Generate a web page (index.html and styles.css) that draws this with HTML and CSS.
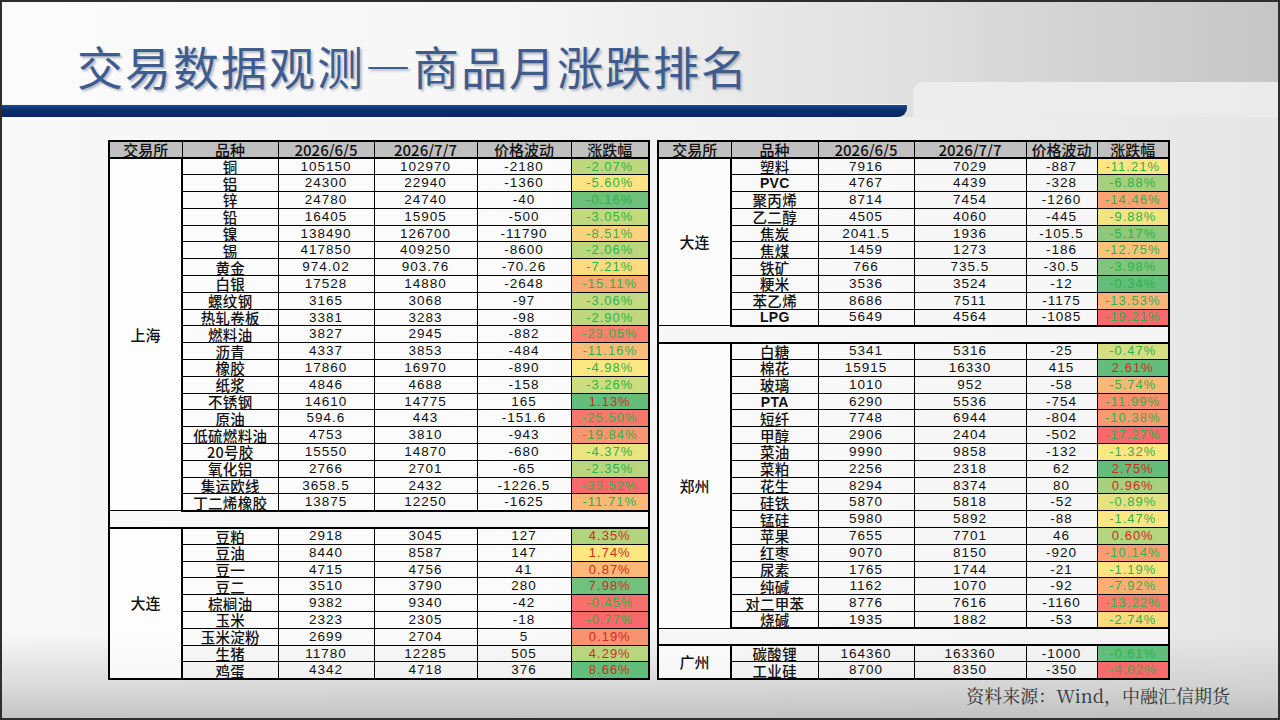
FILE: index.html
```html
<!DOCTYPE html>
<html lang="zh-CN">
<head>
<meta charset="utf-8">
<title>交易数据观测—商品月涨跌排名</title>
<link rel="stylesheet" href="styles.css">
</head>
<body>
<div class="slide">
  <header class="header">
    <h1 class="title">交易数据观测—商品月涨跌排名</h1>
    <div class="bar"></div>
  </header>
  <main class="content">
    <table class="tbl tbl-left">
      <colgroup><col style="width:73px"><col style="width:96px"><col style="width:96px"><col style="width:103px"><col style="width:94px"><col style="width:78px"></colgroup>
      <thead><tr><th>交易所</th><th>品种</th><th>2026/6/5</th><th>2026/7/7</th><th>价格波动</th><th>涨跌幅</th></tr></thead>
      <tbody>
        <tr class="g-first"><td class="ex" rowspan="21">上海</td><td class="nm">铜</td><td>105150</td><td>102970</td><td>-2180</td><td class="pc neg" style="background:#bfd87e">-2.07%</td></tr>
        <tr><td class="nm">铝</td><td>24300</td><td>22940</td><td>-1360</td><td class="pc neg" style="background:#fee383">-5.60%</td></tr>
        <tr><td class="nm">锌</td><td>24780</td><td>24740</td><td>-40</td><td class="pc neg" style="background:#6cc07a">-0.16%</td></tr>
        <tr><td class="nm">铅</td><td>16405</td><td>15905</td><td>-500</td><td class="pc neg" style="background:#c3d97f">-3.05%</td></tr>
        <tr><td class="nm">镍</td><td>138490</td><td>126700</td><td>-11790</td><td class="pc neg" style="background:#fdd27f">-8.51%</td></tr>
        <tr><td class="nm">锡</td><td>417850</td><td>409250</td><td>-8600</td><td class="pc neg" style="background:#bdd77e">-2.06%</td></tr>
        <tr><td class="nm">黄金</td><td>974.02</td><td>903.76</td><td>-70.26</td><td class="pc neg" style="background:#fddc81">-7.21%</td></tr>
        <tr><td class="nm">白银</td><td>17528</td><td>14880</td><td>-2648</td><td class="pc neg" style="background:#fba973">-15.11%</td></tr>
        <tr><td class="nm">螺纹钢</td><td>3165</td><td>3068</td><td>-97</td><td class="pc neg" style="background:#c5da80">-3.06%</td></tr>
        <tr><td class="nm">热轧卷板</td><td>3381</td><td>3283</td><td>-98</td><td class="pc neg" style="background:#bfd87f">-2.90%</td></tr>
        <tr><td class="nm">燃料油</td><td>3827</td><td>2945</td><td>-882</td><td class="pc neg" style="background:#f8826c">-23.05%</td></tr>
        <tr><td class="nm">沥青</td><td>4337</td><td>3853</td><td>-484</td><td class="pc neg" style="background:#fcbd79">-11.16%</td></tr>
        <tr><td class="nm">橡胶</td><td>17860</td><td>16970</td><td>-890</td><td class="pc neg" style="background:#fee683">-4.98%</td></tr>
        <tr><td class="nm">纸浆</td><td>4846</td><td>4688</td><td>-158</td><td class="pc neg" style="background:#cddc81">-3.26%</td></tr>
        <tr><td class="nm">不锈钢</td><td>14610</td><td>14775</td><td>165</td><td class="pc pos" style="background:#63be7b">1.13%</td></tr>
        <tr><td class="nm">原油</td><td>594.6</td><td>443</td><td>-151.6</td><td class="pc neg" style="background:#f8786b">-25.50%</td></tr>
        <tr><td class="nm">低硫燃料油</td><td>4753</td><td>3810</td><td>-943</td><td class="pc neg" style="background:#f99570">-19.84%</td></tr>
        <tr><td class="nm">20号胶</td><td>15550</td><td>14870</td><td>-680</td><td class="pc neg" style="background:#ebe483">-4.37%</td></tr>
        <tr><td class="nm">氧化铝</td><td>2766</td><td>2701</td><td>-65</td><td class="pc neg" style="background:#b9d67e">-2.35%</td></tr>
        <tr><td class="nm">集运欧线</td><td>3658.5</td><td>2432</td><td>-1226.5</td><td class="pc neg" style="background:#f8696b">-33.52%</td></tr>
        <tr class="g-last"><td class="nm">丁二烯橡胶</td><td>13875</td><td>12250</td><td>-1625</td><td class="pc neg" style="background:#fbb977">-11.71%</td></tr>
        <tr class="gap"><td colspan="6"></td></tr>
        <tr class="g-first"><td class="ex" rowspan="9">大连</td><td class="nm">豆粕</td><td>2918</td><td>3045</td><td>127</td><td class="pc pos" style="background:#b3d47e">4.35%</td></tr>
        <tr><td class="nm">豆油</td><td>8440</td><td>8587</td><td>147</td><td class="pc pos" style="background:#fee683">1.74%</td></tr>
        <tr><td class="nm">豆一</td><td>4715</td><td>4756</td><td>41</td><td class="pc pos" style="background:#fcb879">0.87%</td></tr>
        <tr><td class="nm">豆二</td><td>3510</td><td>3790</td><td>280</td><td class="pc pos" style="background:#70c17b">7.98%</td></tr>
        <tr><td class="nm">棕榈油</td><td>9382</td><td>9340</td><td>-42</td><td class="pc neg" style="background:#f8706b">-0.45%</td></tr>
        <tr><td class="nm">玉米</td><td>2323</td><td>2305</td><td>-18</td><td class="pc neg" style="background:#f8696b">-0.77%</td></tr>
        <tr><td class="nm">玉米淀粉</td><td>2699</td><td>2704</td><td>5</td><td class="pc pos" style="background:#f99270">0.19%</td></tr>
        <tr><td class="nm">生猪</td><td>11780</td><td>12285</td><td>505</td><td class="pc pos" style="background:#b8d67e">4.29%</td></tr>
        <tr class="g-last"><td class="nm">鸡蛋</td><td>4342</td><td>4718</td><td>376</td><td class="pc pos" style="background:#63be7b">8.66%</td></tr>
      </tbody>
    </table>
    <table class="tbl tbl-right">
      <colgroup><col style="width:73px"><col style="width:87px"><col style="width:96px"><col style="width:112px"><col style="width:71px"><col style="width:72px"></colgroup>
      <thead><tr><th>交易所</th><th>品种</th><th>2026/6/5</th><th>2026/7/7</th><th>价格波动</th><th>涨跌幅</th></tr></thead>
      <tbody>
        <tr class="g-first"><td class="ex" rowspan="10">大连</td><td class="nm">塑料</td><td>7916</td><td>7029</td><td>-887</td><td class="pc neg" style="background:#fee683">-11.21%</td></tr>
        <tr><td class="nm lat">PVC</td><td>4767</td><td>4439</td><td>-328</td><td class="pc neg" style="background:#a6d07e">-6.88%</td></tr>
        <tr><td class="nm">聚丙烯</td><td>8714</td><td>7454</td><td>-1260</td><td class="pc neg" style="background:#fba373">-14.46%</td></tr>
        <tr><td class="nm">乙二醇</td><td>4505</td><td>4060</td><td>-445</td><td class="pc neg" style="background:#f3e383">-9.88%</td></tr>
        <tr><td class="nm">焦炭</td><td>2041.5</td><td>1936</td><td>-105.5</td><td class="pc neg" style="background:#8dc87d">-5.17%</td></tr>
        <tr><td class="nm">焦煤</td><td>1459</td><td>1273</td><td>-186</td><td class="pc neg" style="background:#fcc27a">-12.75%</td></tr>
        <tr><td class="nm">铁矿</td><td>766</td><td>735.5</td><td>-30.5</td><td class="pc neg" style="background:#80c57c">-3.98%</td></tr>
        <tr><td class="nm">粳米</td><td>3536</td><td>3524</td><td>-12</td><td class="pc neg" style="background:#63be7b">-0.34%</td></tr>
        <tr><td class="nm">苯乙烯</td><td>8686</td><td>7511</td><td>-1175</td><td class="pc neg" style="background:#fcb378">-13.53%</td></tr>
        <tr class="g-last"><td class="nm lat">LPG</td><td>5649</td><td>4564</td><td>-1085</td><td class="pc neg" style="background:#f8696b">-19.21%</td></tr>
        <tr class="gap"><td colspan="6"></td></tr>
        <tr class="g-first"><td class="ex" rowspan="17">郑州</td><td class="nm">白糖</td><td>5341</td><td>5316</td><td>-25</td><td class="pc neg" style="background:#d5df82">-0.47%</td></tr>
        <tr><td class="nm">棉花</td><td>15915</td><td>16330</td><td>415</td><td class="pc pos" style="background:#63be7b">2.61%</td></tr>
        <tr><td class="nm">玻璃</td><td>1010</td><td>952</td><td>-58</td><td class="pc neg" style="background:#fcb879">-5.74%</td></tr>
        <tr><td class="nm lat">PTA</td><td>6290</td><td>5536</td><td>-754</td><td class="pc neg" style="background:#fa8c6f">-11.99%</td></tr>
        <tr><td class="nm">短纤</td><td>7748</td><td>6944</td><td>-804</td><td class="pc neg" style="background:#fa9a71">-10.38%</td></tr>
        <tr><td class="nm">甲醇</td><td>2906</td><td>2404</td><td>-502</td><td class="pc neg" style="background:#f8696b">-17.27%</td></tr>
        <tr><td class="nm">菜油</td><td>9990</td><td>9858</td><td>-132</td><td class="pc neg" style="background:#fee683">-1.32%</td></tr>
        <tr><td class="nm">菜粕</td><td>2256</td><td>2318</td><td>62</td><td class="pc pos" style="background:#63be7b">2.75%</td></tr>
        <tr><td class="nm">花生</td><td>8294</td><td>8374</td><td>80</td><td class="pc pos" style="background:#a8d17e">0.96%</td></tr>
        <tr><td class="nm">硅铁</td><td>5870</td><td>5818</td><td>-52</td><td class="pc neg" style="background:#e4e283">-0.89%</td></tr>
        <tr><td class="nm">锰硅</td><td>5980</td><td>5892</td><td>-88</td><td class="pc neg" style="background:#fee683">-1.47%</td></tr>
        <tr><td class="nm">苹果</td><td>7655</td><td>7701</td><td>46</td><td class="pc pos" style="background:#b6d57f">0.60%</td></tr>
        <tr><td class="nm">红枣</td><td>9070</td><td>8150</td><td>-920</td><td class="pc neg" style="background:#fa9e72">-10.14%</td></tr>
        <tr><td class="nm">尿素</td><td>1765</td><td>1744</td><td>-21</td><td class="pc neg" style="background:#fee483">-1.19%</td></tr>
        <tr><td class="nm">纯碱</td><td>1162</td><td>1070</td><td>-92</td><td class="pc neg" style="background:#fcae76">-7.92%</td></tr>
        <tr><td class="nm">对二甲苯</td><td>8776</td><td>7616</td><td>-1160</td><td class="pc neg" style="background:#f87b6c">-13.22%</td></tr>
        <tr class="g-last"><td class="nm">烧碱</td><td>1935</td><td>1882</td><td>-53</td><td class="pc neg" style="background:#fed980">-2.74%</td></tr>
        <tr class="gap"><td colspan="6"></td></tr>
        <tr class="g-first"><td class="ex" rowspan="2">广州</td><td class="nm">碳酸锂</td><td>164360</td><td>163360</td><td>-1000</td><td class="pc neg" style="background:#63be7b">-0.61%</td></tr>
        <tr class="g-last"><td class="nm">工业硅</td><td>8700</td><td>8350</td><td>-350</td><td class="pc neg" style="background:#f8696b">-4.02%</td></tr>
      </tbody>
    </table>
  </main>
  <footer class="source">资料来源：Wind，中融汇信期货</footer>
</div>
</body>
</html>
```

FILE: styles.css
```css
* { box-sizing: border-box; }
html, body { margin: 0; padding: 0; }
body {
  width: 1280px;
  height: 720px;
  overflow: hidden;
  font-family: "Noto Sans CJK SC", "Liberation Sans", sans-serif;
  background: #fff;
}
.slide {
  width: 1280px;
  height: 720px;
  border: 2px solid #2e2e2e;
  display: flex;
  flex-direction: column;
  overflow: hidden;
  background:
    linear-gradient(180deg, rgba(255,255,255,0) 0%, rgba(255,255,255,0) 88%, rgba(190,190,190,0.55) 96%, rgba(175,175,175,0.7) 100%),
    linear-gradient(90deg, #f8f8f8 0%, #f3f3f3 55%, #ececec 80%, #e6e6e6 100%);
}
.header {
  position: relative;
  height: 115px;
  flex: none;
  display: flex;
  flex-direction: column;
  justify-content: space-between;
  background: linear-gradient(90deg, #fbfbfb 0%, #f6f6f6 40%, #e2e2e2 68%, #d0d0d0 88%, #c6c6c6 100%);
}
.header::after {
  content: "";
  position: absolute;
  left: 911px;
  top: 80px;
  right: 0;
  bottom: 0;
  background: linear-gradient(90deg, #ededed, #ebebeb);
  border-top-left-radius: 10px;
}
.title {
  margin: 0;
  padding: 40px 0 0 75px;
  font-size: 46px;
  font-weight: 400;
  line-height: 1;
  letter-spacing: 2px;
  color: #3f5c8e;
  text-shadow: 2px 2px 2px rgba(110, 120, 140, 0.45);
  white-space: nowrap;
}
.bar {
  width: 905px;
  height: 13px;
  background: linear-gradient(180deg, #20488a 0%, #0c2f6c 45%, #082760 100%);
  border-top: 1px solid #f2f5fa;
  border-bottom-right-radius: 9px;
}
.content {
  flex: none;
  display: flex;
  align-items: flex-start;
  gap: 7px;
  padding: 23px 0 0 106px;
}
.tbl {
  border-collapse: collapse;
  table-layout: fixed;
  border: 2px solid #000;
  font-size: 13.5px;
  color: #111;
}
.tbl-left { width: 540px; }
.tbl-right { width: 511px; }
.tbl th, .tbl td {
  border: 1px solid #000;
  padding: 0;
  text-align: center;
  vertical-align: middle;
  white-space: nowrap;
  line-height: 14px;
}
.tbl th {
  height: 17px;
  background: #c0c0c0;
  font-weight: 500;
  font-size: 15px;
  line-height: 15px;
}
.tbl tbody tr { height: 16.8px; }
.tbl td {
  background: rgba(255, 255, 255, 0.55);
  font-family: "Liberation Sans", "Noto Sans CJK SC", sans-serif;
  letter-spacing: 1px;
}
.tbl td.nm {
  font-family: "Noto Sans CJK SC", sans-serif;
  font-size: 14.5px;
  font-weight: 500;
  letter-spacing: 0.3px;
  line-height: 15px;
}
.tbl td.nm.lat { font-family: "Liberation Sans", sans-serif; font-weight: 700; font-size: 14px; line-height: 14px; }
.tbl td.ex {
  font-family: "Noto Sans CJK SC", sans-serif;
  font-size: 15px;
  font-weight: 500;
  letter-spacing: 0;
  background: rgba(255, 255, 255, 0.75);
  border-right-width: 2px;
}
.tbl td.pc { font-size: 13px; }
.tbl td.neg { color: #2fb24a; }
.tbl td.pos { color: #d42a1c; }
.tbl tr.g-first td { border-top-width: 2px; }
.tbl tr.g-last td { border-bottom-width: 2px; }
.tbl tr.gap td { background: rgba(248, 248, 248, 0.8); }
.source {
  margin-top: auto;
  align-self: flex-end;
  padding: 0 48px 10px 0;
  font-family: "Noto Serif CJK SC", "Noto Sans CJK SC", serif;
  font-size: 18px;
  color: #333;
}
```
